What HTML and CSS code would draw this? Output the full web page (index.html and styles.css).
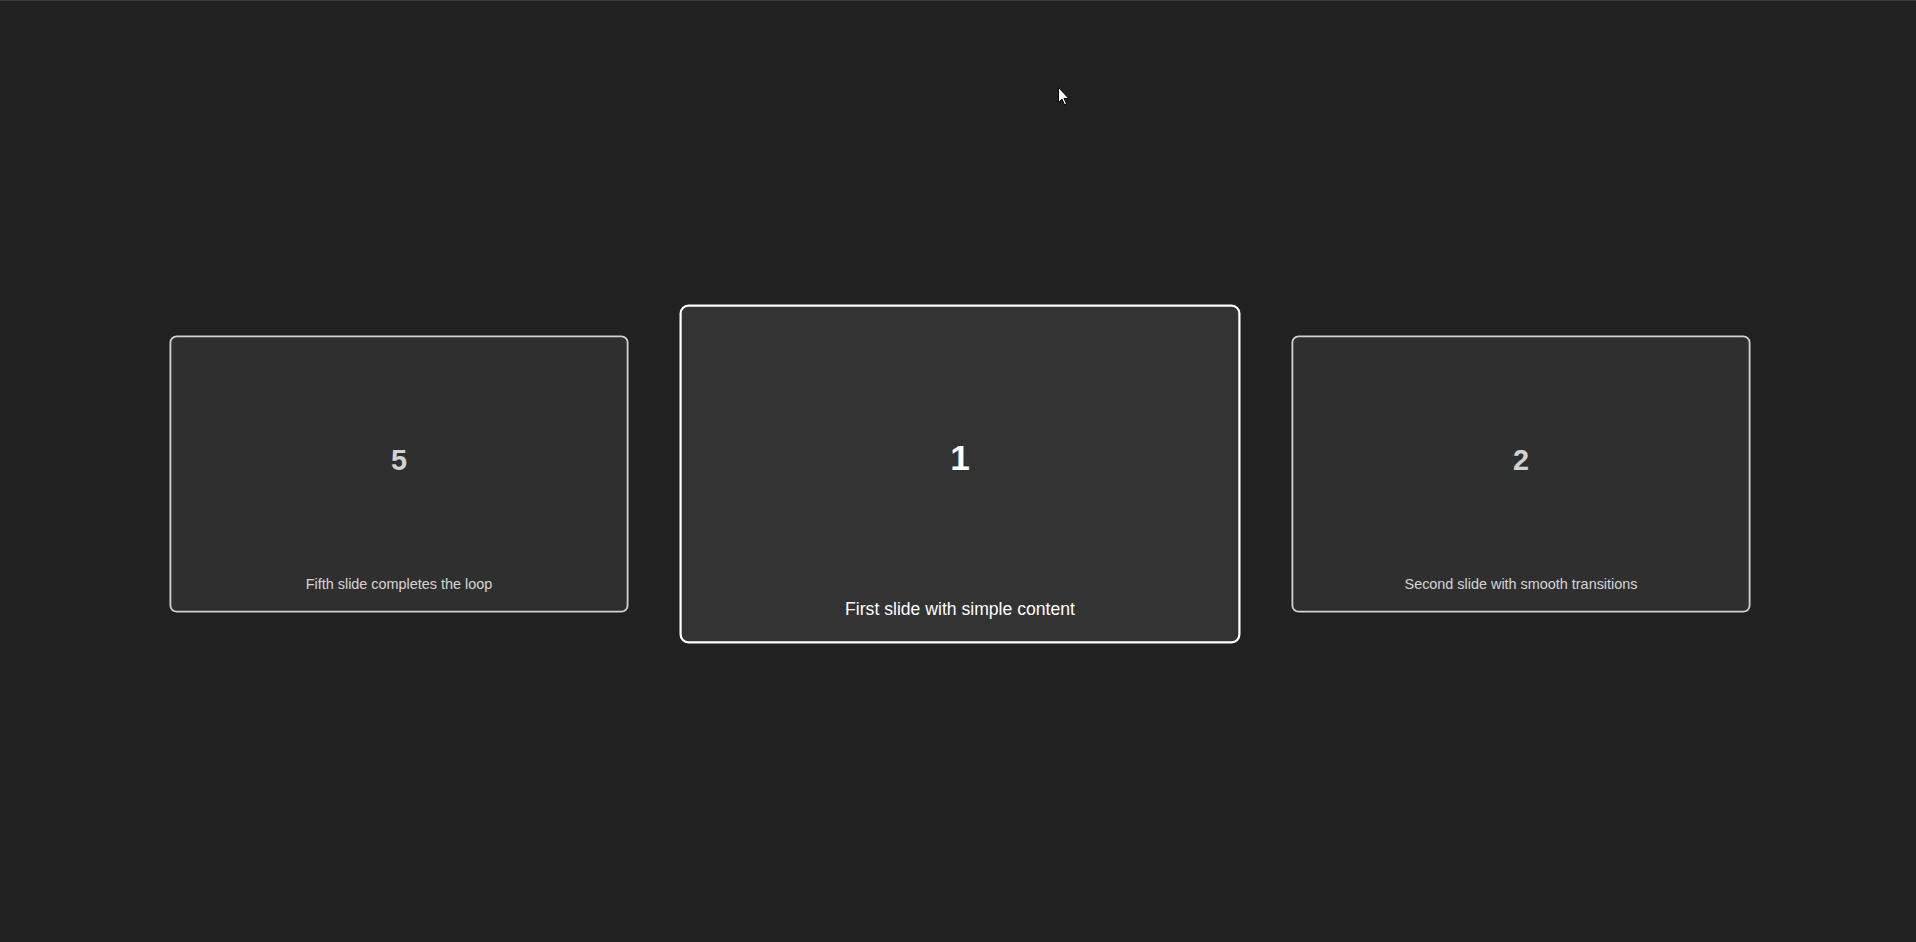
FILE: index.html
```html
<!DOCTYPE html>
<html lang="en">
<head>
<meta charset="utf-8">
<title>Carousel</title>
<link rel="stylesheet" href="styles.css">
</head>
<body>
<div class="topline"></div>
<main class="stage">
  <div class="track">
    <div class="slide side">
      <div class="num">5</div>
      <p class="caption">Fifth slide completes the loop</p>
    </div>
    <div class="slide active">
      <div class="num">1</div>
      <p class="caption">First slide with simple content</p>
    </div>
    <div class="slide side">
      <div class="num">2</div>
      <p class="caption">Second slide with smooth transitions</p>
    </div>
  </div>
</main>
<svg class="cursor" width="12" height="19" viewBox="0 0 12 19">
  <path d="M0.5 0.5 L0.5 15.5 L4 12.2 L6.6 18 L8.6 17.1 L6.1 11.5 L10.8 11.5 Z" fill="#fff" stroke="#000" stroke-width="1"/>
</svg>
</body>
</html>
```

FILE: styles.css
```css
html, body {
  margin: 0;
  padding: 0;
  height: 100%;
  background: #212121;
  overflow: hidden;
  font-family: "Liberation Sans", Arial, sans-serif;
}

.topline {
  height: 1px;
  background: #3b3b3b;
}

.stage {
  height: 941px;
  padding: 4px 0 0 4px;
  box-sizing: border-box;
  display: flex;
  align-items: center;
  justify-content: center;
}

.track {
  display: flex;
  gap: 51px;
  align-items: center;
}

.slide {
  width: 510px;
  height: 308px;
  box-sizing: border-box;
  flex: 0 0 auto;
  background: #333333;
  border: 2px solid #ffffff;
  border-radius: 8px;
  display: flex;
  flex-direction: column;
  align-items: center;
  padding-top: 8px;
  color: #ffffff;
}

.slide.side {
  transform: scale(0.9);
  opacity: 0.8;
}

.slide.active {
  transform: scale(1.1);
}

.num {
  flex: 1;
  display: flex;
  align-items: center;
  justify-content: center;
  font-size: 32px;
  font-weight: bold;
}

.caption {
  margin: 0 0 20px;
  font-size: 16px;
  line-height: 18px;
}

.cursor {
  position: absolute;
  left: 1058px;
  top: 87px;
}
```
